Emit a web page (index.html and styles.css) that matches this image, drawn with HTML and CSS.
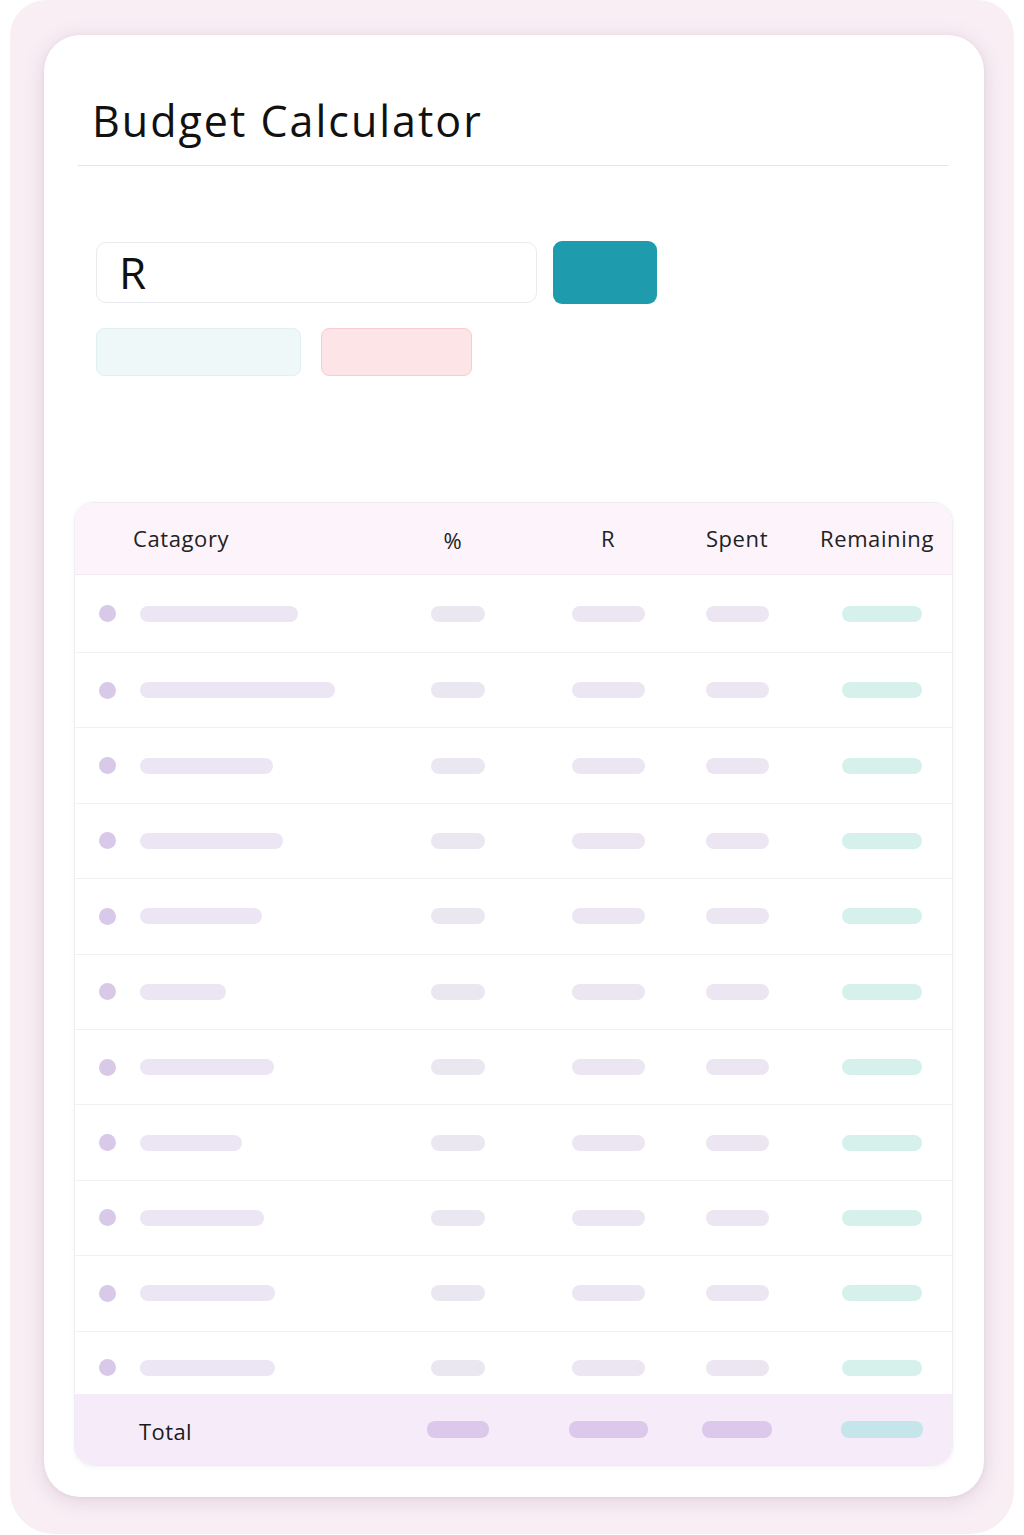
FILE: index.html
```html
<!DOCTYPE html>
<html>
<head>
<meta charset="utf-8">
<link rel="stylesheet" href="styles.css">
</head>
<body>
<div class="frame">
  <div class="card">
    <h1 class="title">Budget Calculator</h1>
    <div class="controls">
      <div class="row-a">
        <div class="input">R</div>
        <div class="btn-primary"></div>
      </div>
      <div class="row-b">
        <div class="chip chip-teal"></div>
        <div class="chip chip-pink"></div>
      </div>
    </div>
    <div class="table">
      <div class="tr thead">
        <div class="c1 hcat">Catagory</div>
        <div class="c2 hpct">%</div>
        <div class="c3">R</div>
        <div class="c4">Spent</div>
        <div class="c5 hrem">Remaining</div>
      </div>
      <div class="tr body first">
        <div class="c1"><span class="dot"></span><span class="bar cat" style="width:158px"></span></div>
        <div class="c2"><span class="bar pct"></span></div>
        <div class="c3"><span class="bar amt"></span></div>
        <div class="c4"><span class="bar spent"></span></div>
        <div class="c5"><span class="bar rem"></span></div>
      </div>
      <div class="tr body">
        <div class="c1"><span class="dot"></span><span class="bar cat" style="width:195px"></span></div>
        <div class="c2"><span class="bar pct"></span></div>
        <div class="c3"><span class="bar amt"></span></div>
        <div class="c4"><span class="bar spent"></span></div>
        <div class="c5"><span class="bar rem"></span></div>
      </div>
      <div class="tr body">
        <div class="c1"><span class="dot"></span><span class="bar cat" style="width:133px"></span></div>
        <div class="c2"><span class="bar pct"></span></div>
        <div class="c3"><span class="bar amt"></span></div>
        <div class="c4"><span class="bar spent"></span></div>
        <div class="c5"><span class="bar rem"></span></div>
      </div>
      <div class="tr body">
        <div class="c1"><span class="dot"></span><span class="bar cat" style="width:143px"></span></div>
        <div class="c2"><span class="bar pct"></span></div>
        <div class="c3"><span class="bar amt"></span></div>
        <div class="c4"><span class="bar spent"></span></div>
        <div class="c5"><span class="bar rem"></span></div>
      </div>
      <div class="tr body">
        <div class="c1"><span class="dot"></span><span class="bar cat" style="width:122px"></span></div>
        <div class="c2"><span class="bar pct"></span></div>
        <div class="c3"><span class="bar amt"></span></div>
        <div class="c4"><span class="bar spent"></span></div>
        <div class="c5"><span class="bar rem"></span></div>
      </div>
      <div class="tr body">
        <div class="c1"><span class="dot"></span><span class="bar cat" style="width:86px"></span></div>
        <div class="c2"><span class="bar pct"></span></div>
        <div class="c3"><span class="bar amt"></span></div>
        <div class="c4"><span class="bar spent"></span></div>
        <div class="c5"><span class="bar rem"></span></div>
      </div>
      <div class="tr body">
        <div class="c1"><span class="dot"></span><span class="bar cat" style="width:134px"></span></div>
        <div class="c2"><span class="bar pct"></span></div>
        <div class="c3"><span class="bar amt"></span></div>
        <div class="c4"><span class="bar spent"></span></div>
        <div class="c5"><span class="bar rem"></span></div>
      </div>
      <div class="tr body">
        <div class="c1"><span class="dot"></span><span class="bar cat" style="width:102px"></span></div>
        <div class="c2"><span class="bar pct"></span></div>
        <div class="c3"><span class="bar amt"></span></div>
        <div class="c4"><span class="bar spent"></span></div>
        <div class="c5"><span class="bar rem"></span></div>
      </div>
      <div class="tr body">
        <div class="c1"><span class="dot"></span><span class="bar cat" style="width:124px"></span></div>
        <div class="c2"><span class="bar pct"></span></div>
        <div class="c3"><span class="bar amt"></span></div>
        <div class="c4"><span class="bar spent"></span></div>
        <div class="c5"><span class="bar rem"></span></div>
      </div>
      <div class="tr body">
        <div class="c1"><span class="dot"></span><span class="bar cat" style="width:135px"></span></div>
        <div class="c2"><span class="bar pct"></span></div>
        <div class="c3"><span class="bar amt"></span></div>
        <div class="c4"><span class="bar spent"></span></div>
        <div class="c5"><span class="bar rem"></span></div>
      </div>
      <div class="tr body last">
        <div class="c1"><span class="dot"></span><span class="bar cat" style="width:135px"></span></div>
        <div class="c2"><span class="bar pct"></span></div>
        <div class="c3"><span class="bar amt"></span></div>
        <div class="c4"><span class="bar spent"></span></div>
        <div class="c5"><span class="bar rem"></span></div>
      </div>
      <div class="tr total">
        <div class="c1 tlabel">Total</div>
        <div class="c2"><span class="bar t-pct"></span></div>
        <div class="c3"><span class="bar t-amt"></span></div>
        <div class="c4"><span class="bar t-spent"></span></div>
        <div class="c5"><span class="bar t-rem"></span></div>
      </div>
    </div>
  </div>
</div>
</body>
</html>
```

FILE: styles.css
```css
* { box-sizing: border-box; }
html, body {
  margin: 0;
  padding: 0;
  background: #ffffff;
  font-family: "Open Sans", "DejaVu Sans", sans-serif;
  color: #1c1c1c;
}
.frame {
  margin: 0 10px;
  height: 1534px;
  background: #f8eef4;
  border-radius: 36px 36px 44px 44px;
  padding: 35px 30px 0 34px;
}
.card {
  width: 940px;
  height: 1462px;
  background: #ffffff;
  border-radius: 36px;
  box-shadow: 0 4px 20px rgba(160, 120, 150, 0.22), 0 1px 4px rgba(160, 120, 150, 0.12);
  padding: 0 31px 0 30px;
}
.title {
  margin: 0 5px 0 4px;
  padding: 61px 0 19px 14px;
  font-size: 43px;
  line-height: 50px;
  font-weight: 400;
  color: #111;
  letter-spacing: 2px;
  border-bottom: 1px solid #e6e4e8;
}
.controls {
  margin-top: 75px;
  padding-left: 22px;
}
.row-a {
  display: flex;
  align-items: center;
  gap: 16px;
}
.input {
  width: 441px;
  height: 61px;
  border: 1.5px solid #ebeaee;
  border-radius: 10px;
  padding-left: 22px;
  font-size: 44px;
  line-height: 58px;
  color: #111;
}
.btn-primary {
  width: 104px;
  height: 63px;
  background: #1e9bad;
  border-radius: 9px;
}
.row-b {
  display: flex;
  gap: 20px;
  margin-top: 24px;
}
.chip {
  height: 48px;
  border-radius: 8px;
}
.chip-teal {
  width: 205px;
  background: #eef8f8;
  border: 1px solid #e1f0f0;
}
.chip-pink {
  width: 151px;
  background: #fde4e7;
  border: 1px solid #f7ccd3;
}
.table {
  margin-top: 126px;
  width: 879px;
  border: 1px solid #f1ecf2;
  border-radius: 20px;
  overflow: hidden;
  box-shadow: 0 1px 4px rgba(180, 150, 175, 0.12);
}
.tr {
  display: grid;
  grid-template-columns: 318px 130px 170px 88px 173px;
  align-items: center;
}
.tr > div {
  display: flex;
  align-items: center;
  justify-content: center;
}
.tr > .c1 { justify-content: flex-start; }
.tr > .c5 { padding-left: 29px; }
.thead {
  height: 72px;
  background: #fcf3fb;
  border-bottom: 1px solid #f1e9f0;
  font-size: 22px;
  color: #222;
  letter-spacing: 0.6px;
  padding-bottom: 2px;
}
.hcat { padding-left: 58px; }
.hpct { padding-right: 10px; padding-top: 4px; }
.tr > .hrem { padding-left: 19px; }
.body {
  height: 75.4px;
  border-bottom: 1px solid #f3f1f4;
}
.body.first { height: 78px; }
.body.last {
  height: 62px;
  border-bottom: none;
  padding-top: 10px;
}
.dot {
  width: 17px;
  height: 17px;
  border-radius: 50%;
  background: #d9c9e9;
  margin-left: 24px;
  margin-right: 24px;
  flex: none;
}
.bar {
  display: block;
  height: 16px;
  border-radius: 8px;
}
.cat { background: #ece6f4; }
.pct { width: 54px; background: #ebe7f1; }
.amt { width: 73px; background: #ebe6f2; }
.spent { width: 63px; background: #ece6f2; }
.rem { width: 80px; background: #d6f1ec; }
.total {
  height: 71px;
  background: #f6ebf9;
}
.tlabel {
  padding-left: 64px;
  font-size: 22px;
  color: #1a1a1a;
  padding-top: 4px;
  letter-spacing: 0.4px;
}
.total .bar { height: 17px; }
.t-pct { width: 62px; background: #dcc8ea; }
.t-amt { width: 79px; background: #dcc8ea; }
.t-spent { width: 70px; background: #dcc8ea; }
.t-rem { width: 82px; background: #c4e6ea; }
```
